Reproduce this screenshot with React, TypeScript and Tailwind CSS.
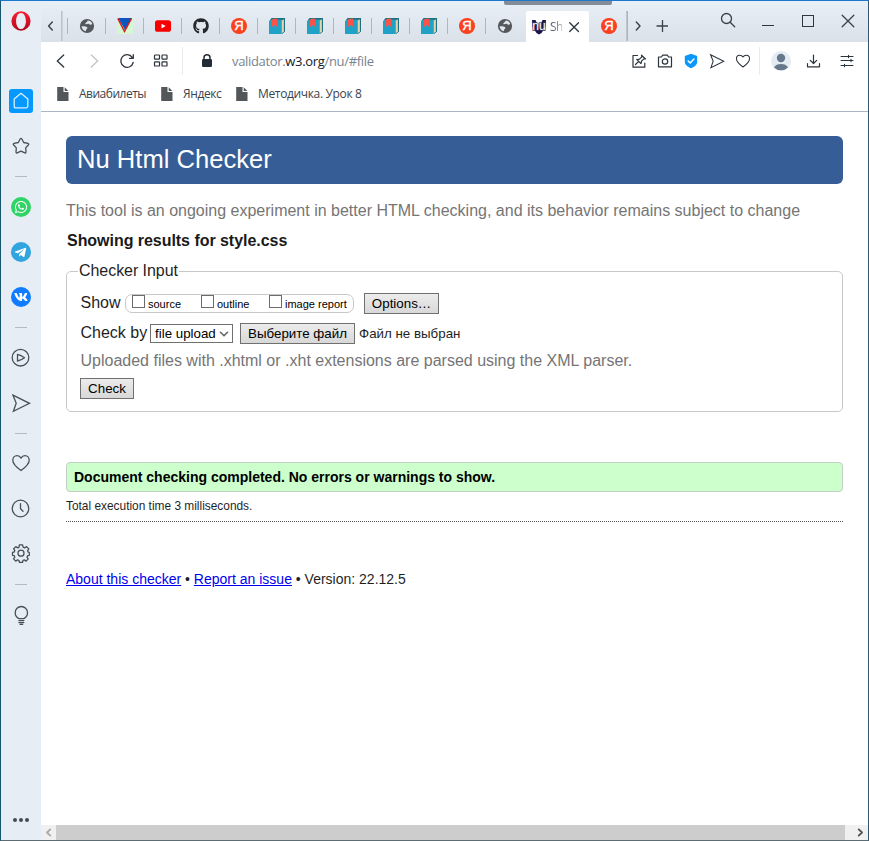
import React from "react";
import { FaGithub, FaTelegramPlane, FaVk, FaWhatsapp } from "react-icons/fa";

type IconProps = { className?: string; size?: number; box?: string; sw?: number; children: React.ReactNode };

function Icon({ className = "", size = 20, box = "0 0 20 20", sw = 1.3, children }: IconProps) {
  return (
    <svg
      className={`block shrink-0 ${className}`}
      width={size}
      height={size}
      viewBox={box}
      fill="none"
      stroke="currentColor"
      strokeWidth={sw}
      strokeLinecap="round"
      strokeLinejoin="round"
    >
      {children}
    </svg>
  );
}

const Globe = () => (
  <Icon size={16} box="0 0 16 16">
    <circle cx="8" cy="8" r="7.1" fill="#54585b" stroke="none" />
    <path d="M8.800 2.600c2 0 3.700 1.300 4.400 3-.5 1.300-1.700 1.400-2.500 1-.7-.2-.8-.8-1.500-.8-.9 0-1.400.6-2.300.5-.9-.1-.8-1.100 0-1.500.9-.4 1.400-1.200 1.900-2.200z" fill="#dfe5ec" stroke="none" />
    <path d="M2.600 8.300c1.300-.3 2.600-.2 3.900.3.900.4 1.700.4 1.900 1.100.2.900-.8 1.200-1.200 1.900-.3.600 0 1-.5 1.600C4.600 12.900 2.600 11 2.600 8.300z" fill="#dfe5ec" stroke="none" />
  </Icon>
);

const Validator = () => (
  <Icon size={16} box="0 0 16 16">
    <path d="M0 0h16v16H0z" fill="#d5f7d2" stroke="none" />
    <path d="M1 0h14L8 12z" fill="#0a55c0" stroke="none" />
    <path d="M.8.5 7.500 13.500 14.500.5" stroke="#e01818" strokeWidth="1.500" strokeLinecap="butt" strokeLinejoin="miter" />
  </Icon>
);

const Youtube = () => (
  <Icon size={16} box="0 0 16 16">
    <rect x="0" y="2.200" width="16" height="11.600" rx="2.600" fill="#f60000" stroke="none" />
    <path d="M6.500 5.700v4.800l4.200-2.400z" fill="#fff" stroke="none" />
  </Icon>
);

const Yandex = () => (
  <span className="flex h-4 w-4 items-center justify-center rounded-full bg-[#fc3f1d] text-[13px] leading-4 text-white [font-family:'Liberation_Sans',Arial,sans-serif] [-webkit-text-stroke:0.4px_white]">
    Я
  </span>
);

const Book = () => (
  <Icon size={16} box="0 0 16 16">
    <path d="M2.500 0H16v13.500L13 16V2H1z" fill="#1f7083" stroke="none" />
    <path d="M12.700 2.400 14.900 1.200v12.100l-2.200 2.300z" fill="#e5d3a9" stroke="none" />
    <path d="M0 3 1.500 1.700h11.300V16H0z" fill="#1fa2c6" stroke="none" />
    <path d="M3 1.700 4.200.7h4.400L8.200 2v7L5.600 7 3 9z" fill="#fb5447" stroke="none" />
  </Icon>
);

const Page = () => (
  <Icon size={14} box="0 0 14 14" className="text-[#54575a]">
    <path d="M1.200 0h6.300v5h5v9H1.200z" fill="currentColor" stroke="none" />
    <path d="M8.700.2 12.400 4H8.700z" fill="currentColor" stroke="none" />
  </Icon>
);

const Send = ({ size = 20 }: { size?: number }) => (
  <Icon size={size}>
    <path d="M2 2.200 18.500 10.300 2.400 18.300 5.200 10.300z" strokeLinejoin="miter" />
  </Icon>
);

const Heart = ({ size = 20 }: { size?: number }) => (
  <Icon size={size}>
    <path d="M10 17.500C6.500 15 1.800 11.400 1.800 7.200 1.800 4.700 3.600 2.700 6 2.700c1.700 0 3.200.9 4 2.400.8-1.500 2.300-2.400 4-2.400 2.400 0 4.200 2 4.200 4.500 0 4.200-4.700 7.800-8.200 10.300z" />
  </Icon>
);

function Tab({ children }: { children: React.ReactNode }) {
  return <div className="flex h-4 w-[38px] shrink-0 items-center border-l border-[#aeb6c0] pl-[11px]">{children}</div>;
}

function Rule({ className }: { className: string }) {
  return <div className={`h-px w-3 shrink-0 bg-[#b3bac3] ${className}`} />;
}

function Sidebar() {
  return (
    <aside className="flex w-10 shrink-0 flex-col items-center bg-[#e6edf5] text-[#4a5058]">
      <div className="flex h-10 shrink-0 items-center">
        <svg className="block" width="20" height="20" viewBox="0 0 20 20">
          <defs>
            <linearGradient id="opera" x1="0" y1="0" x2="0" y2="1">
              <stop offset="0" stopColor="#fb1f35" />
              <stop offset="1" stopColor="#b3061b" />
            </linearGradient>
          </defs>
          <path fillRule="evenodd" fill="url(#opera)" d="M10 .3a9.600 9.700 0 1 0 0 19.400a9.600 9.700 0 1 0 0-19.400zM10 1.900c2.900 0 4.900 3.500 4.900 8.100s-2 8.100-4.900 8.100-4.900-3.500-4.900-8.100 2-8.100 4.900-8.100z" />
        </svg>
      </div>
      <div className="mt-12 flex h-6 w-6 shrink-0 items-center justify-center rounded-[3px] bg-[#0599ff] text-[#d9efff]">
        <Icon><path d="M3.200 8 10 2.300 16.800 8v7.300q0 1.500-1.500 1.500H4.700q-1.500 0-1.500-1.500z" /></Icon>
      </div>
      <Icon className="mt-[23px]"><path d="M9.300 2.800q.7-1 1.400 0l2 3.700 4.300.9q1.100.4.500 1.300l-2.800 3.200.3 4.300q-.2 1.100-1.200.7L10 15.200l-3.800 1.700q-1 .4-1.200-.7l.3-4.300L2.500 8.700q-.6-.9.500-1.300l4.300-.9z" /></Icon>
      <Rule className="mt-5" />
      <div className="mt-5 flex h-5 w-5 shrink-0 items-center justify-center rounded-full bg-[#2fd366] text-white"><FaWhatsapp size={14} /></div>
      <div className="mt-[25px] flex h-5 w-5 shrink-0 items-center justify-center rounded-full bg-[#32a5de] pr-0.5 text-white"><FaTelegramPlane size={13} /></div>
      <div className="mt-[25px] flex h-5 w-5 shrink-0 items-center justify-center rounded-full bg-[#0f7cff] text-white"><FaVk size={14} /></div>
      <Rule className="mt-5" />
      <Icon className="mt-5"><circle cx="9.500" cy="9.700" r="8.300" /><path d="M6.500 6.400q3.500.7 7 3.300-3.500 2.600-7 3.300z" /></Icon>
      <div className="mt-[25px] pr-px"><Send /></div>
      <Rule className="mt-5" />
      <div className="mt-[19px] pr-px"><Heart /></div>
      <Icon className="mt-[26px]"><circle cx="9.500" cy="9.500" r="8.300" /><path d="M9.500 4.700v5l2.500 2.500" /></Icon>
      <Icon className="mt-[24px] mr-px">
        <path d="M8.400 1.900h3.200l.5 2.300 1.500.7 2-1.300 2.200 2.300-1.200 2 .5 1.200 1.200.3v2.900l-1.700.4-.6 1.500 1.200 1.700-2.100 2.200-1.900-1.200-1.300.6-.4 2H8.500l-.5-2-1.400-.6-1.900 1.200-2.100-2.200 1.200-1.800-.6-1.400-1.700-.4V9.400L3.200 9l.6-1.400-1.100-1.800 2.100-2.200 2 1.300 1.200-.6z" />
        <circle cx="10" cy="10.200" r="3" />
      </Icon>
      <Rule className="mt-[21px]" />
      <Icon className="mt-5">
        <path d="M7.900 13.600C5.500 12.300 4.200 10 4.200 7.700 4.200 4.300 7 1.500 10.300 1.500s6.200 2.800 6.200 6.200c0 2.300-1.300 4.600-3.700 5.900zM7.900 15.600h4.900M7.900 17.600h4.900M9.100 19.400h2.500" />
      </Icon>
      <div className="mt-auto mb-[18px] flex gap-[2px]">
        <i className="block h-1 w-1 rounded-full bg-[#444b53]" /><i className="block h-1 w-1 rounded-full bg-[#444b53]" /><i className="block h-1 w-1 rounded-full bg-[#444b53]" />
      </div>
    </aside>
  );
}

function TabBar() {
  return (
    <div className="flex h-[41px] shrink-0 items-center bg-linear-to-b from-[#e8eff7] to-[#dae1e9] pt-2 text-[#39414b]">
      <div className="flex w-5 shrink-0 justify-center"><Icon size={10} box="0 0 10 10" sw={1.400}><path d="M6.300 1 2.600 5l3.700 4" /></Icon></div>
      <div className="mr-[4px] h-[30px] w-[2px] shrink-0 bg-linear-to-r from-[#b4bbc4] to-[#d3dae2]" />
      <Tab><Globe /></Tab>
      <Tab><Validator /></Tab>
      <Tab><Youtube /></Tab>
      <Tab><FaGithub size={16} color="#22272c" /></Tab>
      <Tab><Yandex /></Tab>
      <Tab><Book /></Tab>
      <Tab><Book /></Tab>
      <Tab><Book /></Tab>
      <Tab><Book /></Tab>
      <Tab><Book /></Tab>
      <Tab><Yandex /></Tab>
      <Tab><Globe /></Tab>
      <div className="mt-[2px] ml-[3px] flex h-[31px] w-[63px] shrink-0 items-center rounded-t-[2px] bg-white pl-[5px]">
        <svg className="block shrink-0" width="16" height="16" viewBox="0 0 16 16">
          <path d="M1 1h3.500L8 9l3.500-8H15l-.5 7-4 6L8 15.500 5.500 14l-4-6z" fill="#1b1747" />
          <text x="8" y="10.500" textAnchor="middle" fontSize="12" fontFamily="Liberation Sans, sans-serif" fill="#fff" stroke="#3b3764" strokeWidth="1.400" paintOrder="stroke">nu</text>
        </svg>
        <span className="ml-[3px] w-[12px] overflow-hidden bg-linear-to-r from-[#3d4853] to-[#a9b6c4] bg-clip-text text-[12px] leading-4 tracking-[-0.5px] whitespace-nowrap text-transparent">Sh</span>
        <Icon size={12} box="0 0 12 12" className="ml-[6px] text-[#2c333a]"><path d="m1.700 1.700 8.800 8.800m0-8.800-8.800 8.800" /></Icon>
      </div>
      <div className="ml-3 shrink-0"><Yandex /></div>
      <div className="ml-[9px] h-[30px] w-[2px] shrink-0 bg-linear-to-r from-[#c9d0d8] to-[#a3aab3]" />
      <Icon size={10} box="0 0 10 10" sw={1.400} className="ml-[5px]"><path d="M3.300 1 7 5 3.300 9" /></Icon>
      <Icon size={12} box="0 0 12 12" className="ml-[13px]"><path d="M6.500 .5v11M1 6h11" /></Icon>
      <div className="mt-[-10px] ml-[51px] flex items-center">
        <Icon size={18} box="0 0 18 18"><circle cx="7.500" cy="6.500" r="5" /><path d="m11.200 10.300 4.500 4.500" /></Icon>
        <div className="mt-[10px] ml-[25px] h-[1px] w-3 bg-[#30373f]" />
        <div className="ml-[28px] h-3 w-3 border border-[#30373f]" />
        <Icon size={14} box="0 0 14 14" className="ml-[27px]"><path d="m1.200 1.200 11.600 11.600m0-11.600L1.200 12.800" /></Icon>
      </div>
    </div>
  );
}

function Toolbar() {
  return (
    <div className="flex h-[38px] shrink-0 items-center text-[#2c343d]">
      <Icon size={16} box="0 0 16 16" className="ml-[12px]"><path d="M10.700 2 4.300 8l6.400 6" /></Icon>
      <Icon size={16} box="0 0 16 16" className="ml-[17px] text-[#c0c4c9]"><path d="m5.300 2 6.400 6-6.400 6" /></Icon>
      <Icon size={16} box="0 0 16 16" className="ml-[17px]"><path d="M14.200 9.500A6.300 6.300 0 1 1 13.200 4.300M14.300 1.700v3.600h-3.800" /></Icon>
      <Icon size={16} box="0 0 16 16" className="ml-[18px]" sw={1.200}>
        <rect x="1.500" y="2" width="5" height="4.200" rx=".6" /><rect x="9" y="2" width="5" height="4.200" rx=".6" />
        <rect x="1.500" y="8.800" width="5" height="4.200" rx=".6" /><rect x="9" y="8.800" width="5" height="4.200" rx=".6" />
      </Icon>
      <div className="ml-[13px] h-7 w-px bg-[#e9ecef]" />
      <Icon size={14} box="0 0 14 14" className="ml-[17px] text-[#232c37]">
        <rect x="2" y="5" width="10" height="8" rx="1.200" fill="currentColor" stroke="none" /><path d="M4 6V3.800a3 3 0 0 1 6 0V6" strokeWidth="1.500" />
      </Icon>
      <span className="ml-[18px] w-[146px] text-[13px] leading-5 tracking-[-0.33px] whitespace-nowrap text-[#778390] [font-family:'Open_Sans','Noto_Sans',sans-serif]">
        validator.<span className="text-[#14191f]">w3.org</span>/nu/#file
      </span>
      <Icon size={16} box="0 0 16 16" className="ml-[253px]" sw={1.200}>
        <path d="M6.500 2.500H2v11.700h11.800V10M4.500 11.500l3.200-3.200M5.700 6.300l4 4M6.200 6.700l2.300-.5 2.300-2.400-.3-1.600 4 3.800-1.600-.2-2.400 2.400-.4 2.100" />
      </Icon>
      <Icon size={16} box="0 0 16 16" className="ml-[10px]" sw={1.200}>
        <path d="M1.500 4h3l1-1.800h5l1 1.800h3v9.800h-13z" /><circle cx="8" cy="8.500" r="2.700" />
      </Icon>
      <Icon size={16} box="0 0 16 16" className="ml-[10px]">
        <path d="M8 .8 14.200 3v6c0 2.700-3 5-6.200 6.200C4.800 14 1.800 11.700 1.800 9V3z" fill="#0c98fb" stroke="none" /><path d="m5.200 8 2 2 3.700-4" stroke="#fff" strokeWidth="1.500" />
      </Icon>
      <div className="ml-[10px]"><Send size={16} /></div>
      <div className="ml-[10px]"><Heart size={16} /></div>
      <div className="ml-[8px] h-7 w-px bg-[#e9ecef]" />
      <svg className="ml-[11px] block shrink-0" width="20" height="20" viewBox="0 0 20 20">
        <circle cx="10" cy="10" r="10" fill="#e4ecf3" /><circle cx="10" cy="7" r="4.200" fill="#66788b" /><path d="M3 16.500c1-2.700 4-3.600 7-3.600s6 .9 7 3.600A10 10 0 0 1 3 16.500z" fill="#66788b" />
      </svg>
      <Icon size={16} box="0 0 16 16" className="ml-[14px]" sw={1.200}><path d="M8.500 2v8.500M5.300 7.300l3.200 3.200 3.200-3.200M2.500 10.500v3.300h12v-3.300" /></Icon>
      <Icon size={16} box="0 0 16 16" className="ml-[18px]" sw={1.100}><path d="M2 3.500h12M2 7.500h12M2 12.500h12M9.500 2.300v2.400M12 6.300v2.400M5.500 11.300v2.400" /></Icon>
    </div>
  );
}

function Bookmarks() {
  return (
    <div className="flex h-8 shrink-0 items-center border-b border-[#abb7c4] pb-[3px] pl-[15px] text-[12px] leading-4 whitespace-nowrap text-[#3b434c] [font-family:'Open_Sans','Noto_Sans',sans-serif]">
      <Page /><span className="ml-[9px] w-[67px] tracking-[-0.5px]">Авиабилеты</span>
      <div className="ml-[14px]"><Page /></div><span className="ml-[9px] w-[40px] tracking-[-0.4px]">Яндекс</span>
      <div className="ml-[12px]"><Page /></div><span className="ml-[9px] tracking-[-0.35px]">Методичка. Урок 8</span>
    </div>
  );
}

const buttonLook = "flex h-[21px] shrink-0 items-center justify-center border border-[#707070] bg-linear-to-b from-[#ececec] to-[#d8d8d8] text-[13.333px] whitespace-nowrap text-black";

function Check({ label, className }: { label: string; className: string }) {
  return (
    <label className={`flex ${className}`}>
      <span className="h-[13px] w-[13px] shrink-0 border border-[#6b6b6b] bg-white" />
      <span className="ml-[3px] text-[11px] leading-[18px] whitespace-nowrap text-black">{label}</span>
    </label>
  );
}

function Content() {
  return (
    <main className="flex grow flex-col pt-6 pr-[25px] pl-[25px] text-[16px] text-[#1f1f1f] [font-family:'Liberation_Sans',Arial,sans-serif]">
      <h1 className="h-12 shrink-0 rounded-[6px] bg-[#365d95] pl-[11px] text-[25.6px] leading-[46px] text-white">Nu Html Checker</h1>
      <p className="mt-[17px] leading-5 whitespace-nowrap text-[#757575]">This tool is an ongoing experiment in better HTML checking, and its behavior remains subject to change</p>
      <h2 className="mt-[10px] pl-px leading-5 font-bold tracking-[-0.04px] whitespace-nowrap text-[#1a1a1a]">Showing results for style.css</h2>
      <fieldset className="mt-[10px] h-[151px] shrink-0 rounded-[5px] border border-[#c8c8c8] pl-[13px]">
        <legend className="-ml-[2px] px-px leading-5 tracking-[-0.05px] whitespace-nowrap">Checker Input</legend>
        <div className="mt-[12px] flex h-[21px] items-center">
          <span className="-mt-[2px] w-[45px] pl-[0.5px] leading-5">Show</span>
          <div className="flex h-[19px] w-[229px] rounded-[7px] border border-[#c8c8c8] pl-[6px]">
            <Check label="source" className="w-[69px]" />
            <Check label="outline" className="w-[68px]" />
            <Check label="image report" className="" />
          </div>
          <button className={`ml-[10px] w-[75px] ${buttonLook}`}>Options…</button>
        </div>
        <div className="mt-[9px] flex h-[21px] items-center">
          <span className="-mt-[2px] w-[70px] pl-[0.5px] leading-5 whitespace-nowrap">Check by</span>
          <div className="flex h-[19px] w-[83px] items-center border border-[#707070] bg-white pl-1 text-[13.333px] whitespace-nowrap text-black">
            <span className="w-[63px]">file upload</span>
            <Icon size={10} box="0 0 10 10" className="ml-px text-[#666]" sw={1.600}><path d="m1.500 3.300 3.500 3.500 3.500-3.500" /></Icon>
          </div>
          <button className={`ml-[7px] w-[115px] ${buttonLook}`}>Выберите файл</button>
          <span className="ml-1 text-[13.333px] whitespace-nowrap">Файл не выбран</span>
        </div>
        <p className="mt-[7px] pl-[0.5px] leading-5 whitespace-nowrap text-[#757575]">Uploaded files with .xhtml or .xht extensions are parsed using the XML parser.</p>
        <button className={`mt-[7px] w-[54px] ${buttonLook}`}>Check</button>
      </fieldset>
      <p className="mt-[50px] h-[30px] shrink-0 rounded-[4px] border border-[#c4cfc4] bg-[#ccffcc] pl-[7px] text-[14px] leading-7 font-bold whitespace-nowrap text-black">Document checking completed. No errors or warnings to show.</p>
      <p className="mt-[5px] text-[11.900px] leading-[18px] whitespace-nowrap">Total execution time 3 milliseconds.</p>
      <div className="mt-[6px] border-t border-dotted border-[#555]" />
      <p className="mt-[47px] text-[14px] leading-5 whitespace-nowrap">
        <a className="text-[#0000ee] underline">About this checker</a> • <a className="text-[#0000ee] underline">Report an issue</a> • Version: 22.12.5
      </p>
    </main>
  );
}

export default function App() {
  return (
    <div className="relative flex h-[841px] w-[869px] overflow-hidden border border-t-[#1b78cc] border-r-[#2d5774] border-b-[#5d6b72] border-l-[#17566f] bg-white [font-family:'Open_Sans','Noto_Sans',sans-serif]">
      <Sidebar />
      <div className="flex w-[827px] shrink-0 flex-col">
        <TabBar />
        <Toolbar />
        <Bookmarks />
        <Content />
        <div className="flex h-[15px] shrink-0 bg-[#f0f0f0]">
          <div className="flex w-[15px] items-center justify-center text-[#aaa]"><Icon size={9} box="0 0 10 10" sw={2}><path d="M7 1.500 3.300 5 7 8.500" /></Icon></div>
          <div className="w-[789px] bg-[#cdcdcd]" />
          <div className="flex grow items-center justify-center pl-2 text-[#505050]"><Icon size={9} box="0 0 10 10" sw={2}><path d="M3 1.500 6.700 5 3 8.500" /></Icon></div>
        </div>
      </div>
      <div className="absolute -top-px left-[503px] h-[5px] w-[108px] rounded-b-[2px] border-t border-[#174f83] bg-[#828d99]" />
    </div>
  );
}
